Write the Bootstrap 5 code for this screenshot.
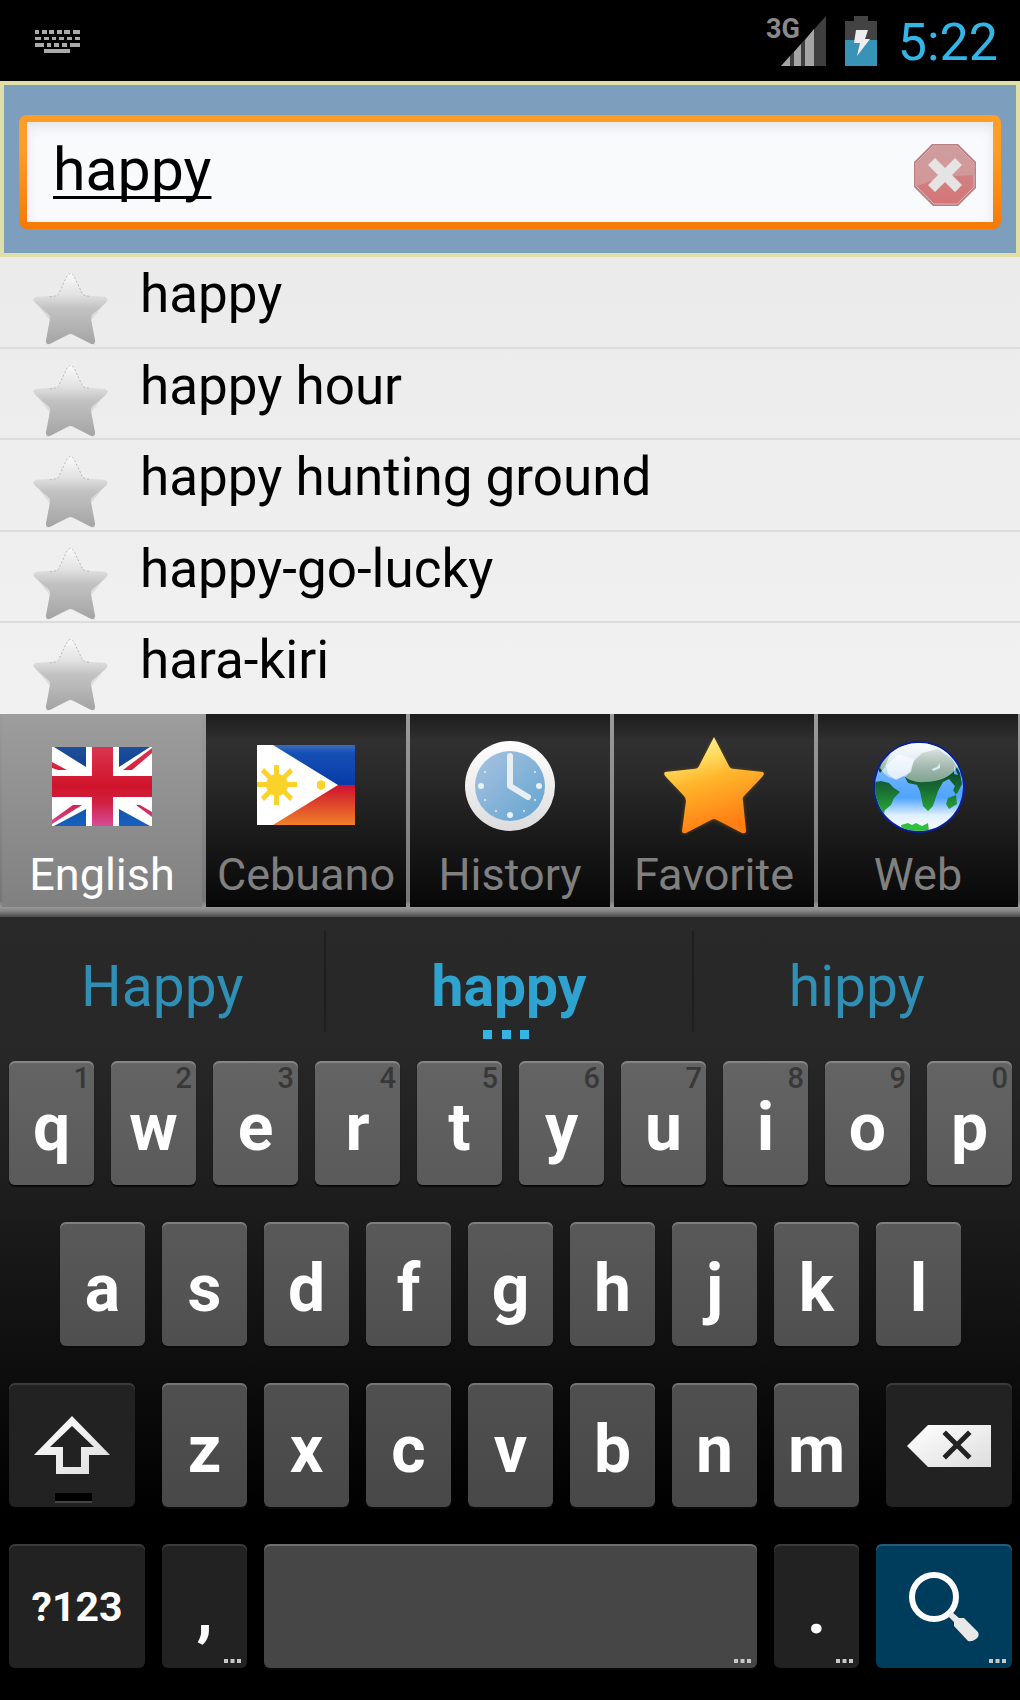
<!DOCTYPE html>
<html lang="en">
<head>
<meta charset="utf-8">
<meta name="viewport" content="width=device-width, initial-scale=1">
<title>Cebuano Dictionary</title>
<link href="https://cdn.jsdelivr.net/npm/bootstrap@5.3.0/dist/css/bootstrap.min.css" rel="stylesheet">
<style>
body{font-family:Roboto,"Noto Sans",sans-serif;background:#000}
.btn{--bs-btn-border-width:0px;--bs-btn-padding-x:0px;--bs-btn-padding-y:0px}
svg{display:block;flex:none}
/* status bar */
.statusbar{height:81px;padding:4px 22px 0 34px;background:#000}
.statusbar svg{margin-bottom:4px}
.clock{font-size:52px;line-height:60px;color:#33b5e5;font-weight:400}
/* search */
.searchpane{background:#7e9ebd;border:4px solid #dfdfaa;padding:30px 15px 24px}
.searchfield{height:114px;border-radius:8px;padding:7px 8px;background:linear-gradient(#ff9d26 30%,#f47a05)}
.searchinner{background:#f9fafc;box-shadow:inset 0 5px 12px #e4e5ea;padding:0 16px 0 26px}
.searchinner input{font-size:59px;line-height:70px;color:#000;text-decoration:underline;text-decoration-thickness:3px;text-underline-offset:6px;text-decoration-skip-ink:none;background:transparent;border:0;padding:0 0 4px;min-width:0;outline:0}
.searchinner .btn{margin-top:6px}
/* results */
.results{background:linear-gradient(#ebebeb,#f1f1f1)}
.result{border-bottom:2px solid #dcdcdc;padding:7px 32px 0;font-size:53px;line-height:61px;color:#000;gap:31px;min-height:91px}
.result:last-child{border-bottom:0}
.result svg{margin-top:7px}
/* tabs */
.tabstrip{background:linear-gradient(#9b9b9b,#767676 92%,#999 95%,#858585 97%,#4a4a4a);padding-bottom:10px}
.tabbtn{flex:1 1 0;min-width:0;height:193px;margin:0 2px;padding-top:16px;color:#808080;background:linear-gradient(#1c1c1c,#303030 14%,#2b2b2b 30%,#070707);border-radius:0;font-size:45px;line-height:52px}
.tabbtn svg{margin:0 auto 13px}
.tabbtn.active{background:linear-gradient(#9d9d9d,#808080);color:#fff}
.tabbtn:hover{color:#808080;background:linear-gradient(#1c1c1c,#303030 14%,#2b2b2b 30%,#070707)}
/* keyboard */
.keyboard{background:linear-gradient(#292929 0,#272727 18%,#1c1c1c 37%,#0e0e0e 57%,#000 76%);padding-bottom:32px}
.suggest{height:144px;padding-top:14px}
.suggest .btn{height:101px;padding-top:9px;color:#2f8fb5;font-size:57px;line-height:67px;border-radius:0;border-right:2px solid #1e1e1e}
.suggest .btn:last-child{border-right:0}
.sg-side{flex:0 0 32%}
.sg-mid{flex:1 1 0}
.suggest .sg-mid{color:#2fa3d0;font-weight:700}
.moredots{bottom:-7px;left:50%;margin-left:-26px}
.keyrow{margin-bottom:37px}
.keyrow:last-child{margin-bottom:0}
.slot{padding:0 8px 0 9px;width:10%;flex:none}
.slot-shift{width:14%}.slot-wide{width:15%}.slot-space{width:50%}
.keycap{width:100%;height:124px;border-radius:6px;color:#fff;font-size:66px;font-weight:700;line-height:78px;padding-top:10px;box-shadow:inset 0 2px 0 rgba(255,255,255,.22),0 2px 1px #0a0a0a}
.r1 .keycap{background:linear-gradient(#646464,#5a5a5a)}
.r2 .keycap{background:linear-gradient(#595959,#4f4f4f)}
.r3 .keycap{background:linear-gradient(#505050,#484848)}
.r4 .keycap{background:#464646}
.keyrow .fnkey{background:#222;box-shadow:inset 0 2px 0 #3b3b3b}
.keyrow .gokey{background:#003c5c;box-shadow:inset 0 2px 0 #285a75}
.keycap:hover,.keycap:active{color:#fff}
.keyhint{top:0;right:4px;font-size:29px;line-height:34px;font-weight:500;color:#383838}
.symkey{font-size:41px}
.midkey{padding-top:2px}
.keymore{right:6px;bottom:5px}
</style>
</head>
<body class="min-vh-100 d-flex flex-column">
<svg width="0" height="0" class="position-absolute" aria-hidden="true">
<defs>
<linearGradient id="greyfill" x1="0" y1="0" x2="0" y2="1"><stop offset="0" stop-color="#fafafa"/><stop offset=".3" stop-color="#e2e2e2"/><stop offset=".5" stop-color="#c2c2c2"/><stop offset="1" stop-color="#a4a4a4"/></linearGradient>
<symbol id="greystar" viewBox="0 0 78 76">
<path d="M39 3L51 25L77 27L60 49L64 74L39 63L14 74L18 49L1 27L27 25z" fill="#000" opacity=".08" transform="translate(0 1)"/>
<path d="M39 2Q41 2 43 6L51 23Q52 25 57 25L74 26Q79 29 74 33L61 44Q59 46 60 50L64 71Q63 76 58 73L41 64Q39 63 37 64L20 73Q15 76 14 71L18 50Q19 46 17 44L4 33Q-1 29 4 26L21 25Q26 25 27 23L35 6Q37 2 39 2Z" fill="url(#greyfill)"/>
<path d="M18 26H21Q26 25 27 23L35 6Q39 -1 43 6L51 23Q52 25 60 26" fill="none" stroke="#b5b5b5" stroke-width="1" stroke-dasharray="2 2"/>
</symbol>
<symbol id="dots" viewBox="0 0 17 4"><path d="M0 0h4v4H0zM6.500 0h4v4h-4zM13 0h4v4h-4z" fill="#c8c8c8"/></symbol>
</defs>
</svg>

<header class="statusbar d-flex align-items-center">
<svg width="46" height="26" viewBox="0 0 46 26" fill="#aaa" aria-label="Keyboard" class="me-auto"><path d="M1 2h4v4H1zM8 2h5v4H8zM15 2h5v4h-5zM23 2h5v4h-5zM30 2h6v4h-6zM39 2h7v4h-7zM1 9h6v3H1zM10 9h5v3h-5zM18 9h4v3h-4zM25 9h5v3h-5zM33 9h5v3h-5zM41 9h5v3h-5zM1 15h9v4H1zM13 15h4v4h-4zM20 15h5v4h-5zM28 15h5v4h-5zM36 15h10v4H36zM10 21h26v4H10z"/></svg>
<svg width="60" height="52" viewBox="0 0 60 52" aria-label="3G signal"><text x="0" y="23" font-family="Roboto" font-size="27" font-weight="700" fill="#8a8a8a">3G</text><path d="M15 51L60 1v50z" fill="#3f3f3f"/><path d="M15 51l9-10v10zM28 51V37l7-8v22zM39 51V25l9-11v37z" fill="#a5a5a5"/></svg>
<svg class="ms-3 me-3" width="40" height="52" viewBox="0 0 40 52" aria-label="Battery charging"><path d="M12 1h14v5h9v19H3V6h9z" fill="#434343"/><path d="M3 25h32v26H3z" fill="#3893b7"/><path d="M14 15h12l-3 9h5L15 41l3-13h-6z" fill="#eee"/></svg>
<span class="clock">5:22</span>
</header>

<form class="searchpane" role="search" onsubmit="return false">
<div class="searchfield">
<div class="searchinner d-flex align-items-center h-100">
<input class="flex-fill" type="text" value="happy" aria-label="Search word" spellcheck="false">
<button type="button" class="btn" aria-label="Clear"><svg width="64" height="64" viewBox="0 0 64 64">
<defs><linearGradient id="redg" x1="0" y1="0" x2="0" y2="1"><stop offset="0" stop-color="#c98f90"/><stop offset="1" stop-color="#d67476"/></linearGradient></defs>
<path d="M19 1h26l18 18v26L45 63H20L1 44V19z" fill="#b98083"/><path d="M20 3h24l17 17v24L44 61H21L3 43V20z" fill="url(#redg)" stroke="#e0b4b5" stroke-width="1"/><path d="M20 4h24l16 16v12Q30 32 4 43V20z" fill="#d3a5a6" opacity=".65"/><path d="M22 15l10 10 10-10 7 7-10 10 10 10-7 7-10-10-10 10-7-7 10-10-10-10z" fill="#e4e4e4"/></svg></button>
</div>
</div>
</form>

<main class="results d-flex flex-column flex-fill">
<a href="#" class="result d-flex align-items-start flex-fill text-decoration-none"><svg width="77" height="75"><use href="#greystar"/></svg><span>happy</span></a>
<a href="#" class="result d-flex align-items-start flex-fill text-decoration-none"><svg width="77" height="75"><use href="#greystar"/></svg><span>happy hour</span></a>
<a href="#" class="result d-flex align-items-start flex-fill text-decoration-none"><svg width="77" height="75"><use href="#greystar"/></svg><span>happy hunting ground</span></a>
<a href="#" class="result d-flex align-items-start flex-fill text-decoration-none"><svg width="77" height="75"><use href="#greystar"/></svg><span>happy-go-lucky</span></a>
<a href="#" class="result d-flex align-items-start flex-fill text-decoration-none"><svg width="77" height="75"><use href="#greystar"/></svg><span>hara-kiri</span></a>
</main>

<nav class="tabstrip d-flex" aria-label="Sections">
<button type="button" class="btn tabbtn active" aria-current="true">
<svg width="104" height="100" viewBox="0 0 104 100"><defs><clipPath id="ukc"><path d="M2 11h100v79H2z"/></clipPath><linearGradient id="ukb" x1="0" y1="0" x2="0" y2="1"><stop offset="0" stop-color="#1d4f9c"/><stop offset=".3" stop-color="#0f4090"/><stop offset="1" stop-color="#1660bd"/></linearGradient><linearGradient id="ukr" gradientUnits="userSpaceOnUse" x1="0" y1="11" x2="0" y2="90"><stop offset="0" stop-color="#dc3450"/><stop offset=".5" stop-color="#cf142b"/><stop offset=".7" stop-color="#d02040"/><stop offset="1" stop-color="#d64c98"/></linearGradient></defs>
<g clip-path="url(#ukc)"><path d="M2 11h100v79H2z" fill="#fff"/><path d="M4 11H36V31zM69 11H100L69 31zM4 90L36 73V90zM69 73L100 90H69z" fill="url(#ukb)"/><path d="M2 26l15 8H8l-6-2zM2 84l21-15h9L2 88zM102 17L82 34h-9l29-22zM102 76l-12-7h-4l16 12z" fill="url(#ukr)"/><path d="M2 40h100v21H2z" fill="url(#ukr)"/><path d="M36 11h6v29h-6zM63 11h6v29h-6zM36 61h6v29h-6zM63 61h6v29h-6z" fill="#fff"/><path d="M42 11h21v79H42z" fill="url(#ukr)"/></g></svg>
English</button>
<button type="button" class="btn tabbtn">
<svg width="104" height="100" viewBox="0 0 104 100"><defs><linearGradient id="phb" x1="0" y1="0" x2="0" y2="1"><stop offset="0" stop-color="#3b6bc0"/><stop offset=".2" stop-color="#1550b5"/><stop offset="1" stop-color="#083aa8"/></linearGradient><linearGradient id="phr" x1="0" y1="0" x2="0" y2="1"><stop offset="0" stop-color="#ce1030"/><stop offset="1" stop-color="#f08028"/></linearGradient></defs>
<path d="M3 9h98v40H3z" fill="url(#phb)"/><path d="M3 49h98v40H3z" fill="url(#phr)"/><path d="M3 9h16l65 40-65 40H3z" fill="#fff"/>
<g fill="#fbd22a"><circle cx="23" cy="49" r="11"/><path d="M20 29h5v40h-5zM3 46h40v5H3zM7 36l3-4 29 29-3 4zM36 32l3 4L10 65l-3-4zM63 46l4-2 4 2v6l-4 2-4-2z"/></g></svg>
Cebuano</button>
<button type="button" class="btn tabbtn">
<svg width="104" height="100" viewBox="0 0 104 100"><defs><linearGradient id="clk" x1="0" y1="0" x2="1" y2="1"><stop offset="0" stop-color="#a9c3e0"/><stop offset="1" stop-color="#62a4cf"/></linearGradient><linearGradient id="rim" x1="0" y1="0" x2="0" y2="1"><stop offset="0" stop-color="#fff"/><stop offset="1" stop-color="#dcdcdc"/></linearGradient></defs>
<circle cx="52" cy="50" r="45" fill="url(#rim)"/><circle cx="52" cy="50" r="35" fill="url(#clk)"/><path d="M52 20v30l18 11" fill="none" stroke="#e9eef3" stroke-width="6" stroke-linecap="round" stroke-linejoin="round"/><g fill="#eaf2f8"><circle cx="23" cy="50" r="3"/><circle cx="81" cy="50" r="3"/><circle cx="52" cy="79" r="3"/><circle cx="38" cy="75" r="1"/><circle cx="66" cy="75" r="1"/><circle cx="27" cy="64" r="1"/><circle cx="77" cy="64" r="1"/><circle cx="27" cy="36" r="1"/><circle cx="77" cy="36" r="1"/></g></svg>
History</button>
<button type="button" class="btn tabbtn">
<svg width="104" height="100" viewBox="0 0 104 100"><defs><linearGradient id="gold" x1="0" y1="0" x2=".3" y2="1"><stop offset="0" stop-color="#fff6b0"/><stop offset=".3" stop-color="#ffdc60"/><stop offset=".52" stop-color="#ffb62c"/><stop offset="1" stop-color="#ff7f14"/></linearGradient><filter id="glow" x="-20%" y="-20%" width="140%" height="140%"><feGaussianBlur stdDeviation="2"/></filter></defs>
<path d="M52 3L67 33L102 37L80 62L84 98L52 83L20 98L25 62L2 37L37 33z" fill="#a56a00" opacity=".7" filter="url(#glow)"/>
<path d="M52 1L67 30Q68 33 73 33L101 36Q103 38 100 41L82 60Q80 62 81 65L84 95Q84 98 80 97L55 84Q52 82 49 84L24 97Q20 98 20 95L24 65Q24 62 22 60L4 41Q1 38 3 36L31 33Q36 33 37 30z" fill="url(#gold)"/></svg>
Favorite</button>
<button type="button" class="btn tabbtn">
<svg width="104" height="100" viewBox="0 0 104 100"><defs><linearGradient id="sea" x1="0" y1="0" x2="0" y2="1"><stop offset="0" stop-color="#d8eaff"/><stop offset=".35" stop-color="#6fb3ff"/><stop offset=".62" stop-color="#4fa3ff"/><stop offset=".82" stop-color="#dff0ff"/><stop offset="1" stop-color="#fff"/></linearGradient><linearGradient id="land" gradientUnits="userSpaceOnUse" x1="0" y1="5" x2="0" y2="95"><stop offset=".3" stop-color="#0a4030"/><stop offset=".6" stop-color="#1c7a34"/><stop offset=".9" stop-color="#2fc040"/></linearGradient><linearGradient id="shine" x1="0" y1="0" x2="0" y2="1"><stop offset="0" stop-color="#fff" stop-opacity=".95"/><stop offset="1" stop-color="#e8f0e8" stop-opacity=".5"/></linearGradient><clipPath id="orb"><circle cx="53" cy="51" r="44"/></clipPath></defs>
<circle cx="53" cy="51" r="46" fill="#0a1f9c"/><circle cx="53" cy="51" r="44" fill="url(#sea)"/>
<g clip-path="url(#orb)"><path d="M9 46l6-1 8 2 5 5 6 4-6 6-3 7-6 5-2 7 2 6-4 1-4-9-4-13zM39 41l4-4 5-12 8-8 16-4 14 10 8 14 2 11-5 10-3-9-5-6-6 3-5 9-2 6-3 9-5 5-5-5-3-15-3-6-9-2zM82 62l8-3 1 9-8 5-3-5zM88 48l4 4-2 7-3-5zM11 31l8-12 5-1-5 13-5 6zM35 89l7-2 4 2 4-2 6 3 6-3 1 8H36z" fill="url(#land)"/>
<path d="M88 30l4 9-4-1zM86 48l3 2-2 4z" fill="#5ab0ff"/>
<path d="M14 32Q22 6 53 5T92 30Q82 46 58 46Q46 47 38 40Q24 48 14 32z" fill="url(#shine)"/><path d="M20 30l12-12 16 5-3 13-15 8-8-6z" fill="#fff" opacity=".6"/><path d="M66 33l5-2 3-4v5l-7 3z" fill="#d5ecff"/></g></svg>
Web</button>
</nav>

<section class="keyboard" aria-label="Keyboard">
<div class="suggest d-flex">
<button type="button" class="btn sg-side">Happy</button>
<button type="button" class="btn sg-mid position-relative">happy<svg class="moredots position-absolute" width="46" height="9" viewBox="0 0 46 9"><path d="M0 0h9v9H0zM19 0h9v9h-9zM37 0h9v9h-9z" fill="#33b5e5"/></svg></button>
<button type="button" class="btn sg-side">hippy</button>
</div>
<div class="keyrow r1 d-flex">
<div class="slot"><button type="button" class="btn keycap position-relative">q<span class="keyhint position-absolute">1</span></button></div>
<div class="slot"><button type="button" class="btn keycap position-relative">w<span class="keyhint position-absolute">2</span></button></div>
<div class="slot"><button type="button" class="btn keycap position-relative">e<span class="keyhint position-absolute">3</span></button></div>
<div class="slot"><button type="button" class="btn keycap position-relative">r<span class="keyhint position-absolute">4</span></button></div>
<div class="slot"><button type="button" class="btn keycap position-relative">t<span class="keyhint position-absolute">5</span></button></div>
<div class="slot"><button type="button" class="btn keycap position-relative">y<span class="keyhint position-absolute">6</span></button></div>
<div class="slot"><button type="button" class="btn keycap position-relative">u<span class="keyhint position-absolute">7</span></button></div>
<div class="slot"><button type="button" class="btn keycap position-relative">i<span class="keyhint position-absolute">8</span></button></div>
<div class="slot"><button type="button" class="btn keycap position-relative">o<span class="keyhint position-absolute">9</span></button></div>
<div class="slot"><button type="button" class="btn keycap position-relative">p<span class="keyhint position-absolute">0</span></button></div>
</div>
<div class="keyrow r2 d-flex justify-content-center">
<div class="slot"><button type="button" class="btn keycap">a</button></div>
<div class="slot"><button type="button" class="btn keycap">s</button></div>
<div class="slot"><button type="button" class="btn keycap">d</button></div>
<div class="slot"><button type="button" class="btn keycap">f</button></div>
<div class="slot"><button type="button" class="btn keycap">g</button></div>
<div class="slot"><button type="button" class="btn keycap">h</button></div>
<div class="slot"><button type="button" class="btn keycap">j</button></div>
<div class="slot"><button type="button" class="btn keycap">k</button></div>
<div class="slot"><button type="button" class="btn keycap">l</button></div>
</div>
<div class="keyrow r3 d-flex">
<div class="slot slot-shift me-auto"><button type="button" class="btn keycap fnkey" aria-label="Shift"><svg class="mx-auto" width="78" height="110" viewBox="0 -16 78 110"><defs><linearGradient id="wht" x1="0" y1="0" x2="1" y2="1"><stop offset="0" stop-color="#fff"/><stop offset="1" stop-color="#ddd"/></linearGradient></defs><path fill-rule="evenodd" d="M39 5L77 44H56V63H23V44H1zM39 15L17 36H30V56H48V36H61z" fill="url(#wht)"/><path d="M22 82h37v8H22z" fill="#000"/><path d="M22 90h37v2H22z" fill="#444"/></svg></button></div>
<div class="slot"><button type="button" class="btn keycap">z</button></div>
<div class="slot"><button type="button" class="btn keycap">x</button></div>
<div class="slot"><button type="button" class="btn keycap">c</button></div>
<div class="slot"><button type="button" class="btn keycap">v</button></div>
<div class="slot"><button type="button" class="btn keycap">b</button></div>
<div class="slot"><button type="button" class="btn keycap">n</button></div>
<div class="slot"><button type="button" class="btn keycap">m</button></div>
<div class="slot slot-shift ms-auto"><button type="button" class="btn keycap fnkey midkey" aria-label="Delete"><svg class="mx-auto" width="86" height="44" viewBox="0 0 86 44"><path d="M1 22L22 1H85V43H22z" fill="url(#wht)"/><path d="M40 10L62 32M62 10L40 32" stroke="#222" stroke-width="5" stroke-linecap="square"/></svg></button></div>
</div>
<div class="keyrow r4 d-flex">
<div class="slot slot-wide"><button type="button" class="btn keycap fnkey symkey midkey">?123</button></div>
<div class="slot"><button type="button" class="btn keycap fnkey position-relative">,<svg class="keymore position-absolute" width="17" height="4"><use href="#dots"/></svg></button></div>
<div class="slot slot-space"><button type="button" class="btn keycap position-relative" aria-label="Space"><svg class="keymore position-absolute" width="17" height="4"><use href="#dots"/></svg></button></div>
<div class="slot"><button type="button" class="btn keycap fnkey position-relative">.<svg class="keymore position-absolute" width="17" height="4"><use href="#dots"/></svg></button></div>
<div class="slot slot-wide"><button type="button" class="btn keycap gokey midkey position-relative" aria-label="Search"><svg class="mx-auto" width="72" height="72" viewBox="0 0 72 72"><circle cx="26" cy="26" r="22" fill="none" stroke="#fff" stroke-width="6"/><path d="M40 45l4-4 7 6h5l14 14q2 4-2 7t-8 2L46 55v-4z" fill="#e8e8e8"/></svg><svg class="keymore position-absolute" width="17" height="4"><use href="#dots"/></svg></button></div>
</div>
</section>
<script src="https://cdn.jsdelivr.net/npm/bootstrap@5.3.0/dist/js/bootstrap.bundle.min.js"></script>
</body>
</html>
